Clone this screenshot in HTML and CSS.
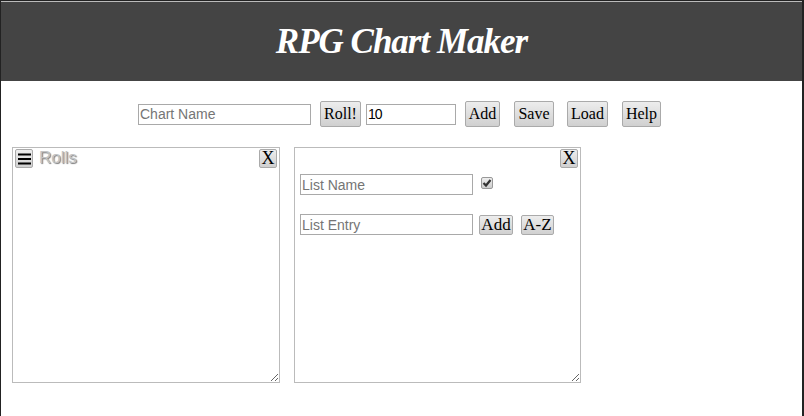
FILE: index.html
```html
<!DOCTYPE html>
<html lang="en">
<head>
<meta charset="utf-8">
<title>RPG Chart Maker</title>
<link rel="stylesheet" href="styles.css">
</head>
<body>
<div class="frame">
  <header class="banner"><h1>RPG Chart Maker</h1></header>
  <div class="toolbar">
    <input class="field name-field" type="text" placeholder="Chart Name">
    <button class="btn roll">Roll!</button>
    <input class="field count-field" type="text" value="10">
    <button class="btn add-top">Add</button>
    <button class="btn save">Save</button>
    <button class="btn load">Load</button>
    <button class="btn help">Help</button>
  </div>
  <div class="panels">
    <section class="panel rolls">
      <div class="panel-top">
        <button class="btn small menu" aria-label="Menu">
          <svg width="13" height="12" viewBox="0 0 13 12"><path d="M0 1.5h13M0 6h13M0 10.5h13" stroke="#000" stroke-width="2"/></svg>
        </button>
        <span class="rolls-title">Rolls</span>
        <button class="btn small close">X</button>
      </div>
    </section>
    <section class="panel list">
      <div class="list-top"><button class="btn small close">X</button></div>
      <div class="list-row first">
        <input class="field list-field" type="text" placeholder="List Name">
        <input class="check" type="checkbox" checked>
      </div>
      <div class="list-row second">
        <input class="field list-field" type="text" placeholder="List Entry">
        <button class="btn list-btn add">Add</button>
        <button class="btn list-btn az">A-Z</button>
      </div>
    </section>
  </div>
</div>
</body>
</html>
```
FILE: styles.css
```css
* { box-sizing: border-box; }
html, body { margin: 0; height: 100%; background: #fff; }
.frame {
  height: 416px;
  border-left: 1px solid #222;
  border-right: 2px solid #222;
  border-top: 1px solid #222;
  overflow: hidden;
}
.banner {
  height: 80px;
  background: #444;
  border-top: 1px solid #bbb;
  display: flex;
  align-items: center;
  justify-content: center;
}
.banner h1 {
  margin: 0;
  color: #fff;
  font: italic bold 35px/1 "Liberation Serif", serif;
  letter-spacing: -1px;
}
.toolbar {
  display: flex;
  justify-content: center;
  align-items: center;
  height: 66px;
  padding-right: 4px;
}
.field {
  height: 21px;
  border: 1px solid #a9a9a9;
  padding: 1px;
  font: 14px "Liberation Sans", Arial, sans-serif;
  color: #000;
  background: #fff;
  border-radius: 0;
  outline: none;
}
.field::placeholder { color: #757575; opacity: 1; }
.name-field { width: 173px; }
.count-field { width: 90px; margin-left: 5px; letter-spacing: -1px; }
.btn {
  height: 26px;
  padding: 0;
  border: 1px solid #aaa;
  border-radius: 2px;
  background: linear-gradient(#ededed, #d0d0d0);
  color: #000;
  font: 16px "Liberation Serif", serif;
  cursor: default;
}
.roll { width: 41px; margin-left: 9px; }
.add-top { width: 35px; margin-left: 9px; }
.save { width: 40px; margin-left: 14px; }
.load { width: 41px; margin-left: 13px; }
.help { width: 39px; margin-left: 14px; }
.panels {
  display: flex;
  gap: 14px;
  padding-left: 11px;
}
.panel {
  height: 236px;
  border: 1px solid #bbb;
  resize: both;
  overflow: hidden;
}
.rolls { width: 268px; }
.list { width: 287px; }
.panel-top { display: flex; align-items: flex-start; padding: 1px 2px; }
.small { height: 19px; font-size: 18px; line-height: 17px; }
.menu { width: 18px; display: flex; align-items: center; justify-content: center; }
.close { margin-left: auto; width: 18px; }
.rolls-title {
  margin-left: 6px;
  font: 17px/18px "Liberation Sans", Arial, sans-serif;
  color: #c4c4c4;
  text-shadow: 1px 1px 1px #777;
}
.list-top { display: flex; padding: 1px 2px; height: 21px; }
.list-row { display: flex; align-items: center; padding-left: 5px; }
.first { height: 21px; margin-top: 5px; }
.second { margin-top: 19px; }
.list-field { width: 173px; }
.check {
  appearance: none;
  margin: 0 0 3px 8px;
  width: 12px;
  height: 12px;
  border: 1px solid #999;
  border-radius: 2px;
  background: url("data:image/svg+xml,%3Csvg xmlns='http://www.w3.org/2000/svg' viewBox='0 0 10 10'%3E%3Cpath d='M1.5 5l2.5 2.5L8.5 2' fill='none' stroke='%23333' stroke-width='2.2'/%3E%3C/svg%3E") center/10px 10px no-repeat, linear-gradient(#eee, #ccc);
}
.list-btn { height: 20px; font-size: 17px; line-height: 18px; }
.add { width: 34px; margin-left: 6px; margin-right: 8px; }
.az { width: 33px; }
```
